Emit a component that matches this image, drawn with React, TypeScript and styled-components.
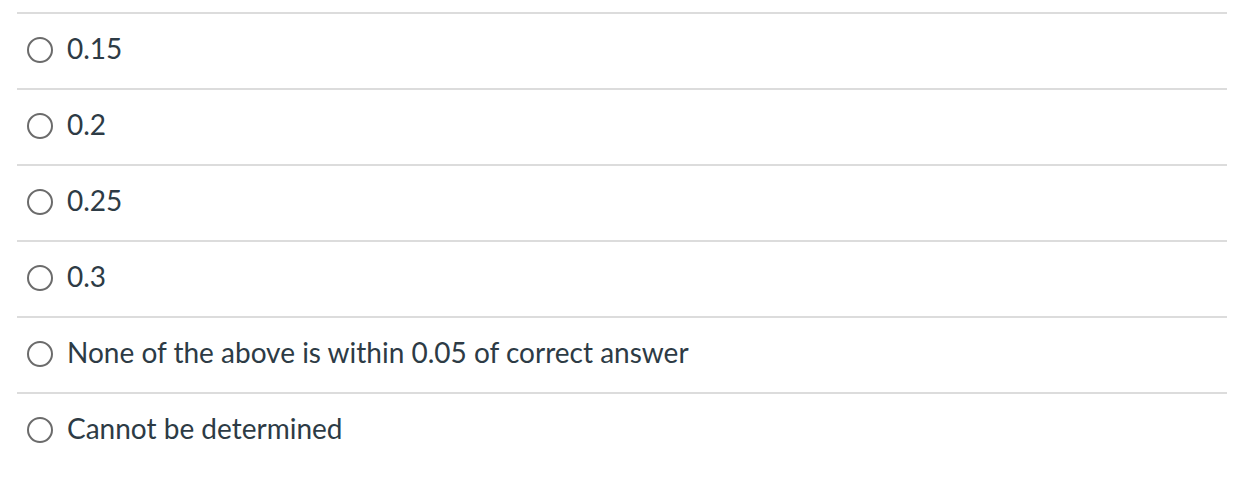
import React from "react";
import styled, { createGlobalStyle } from "styled-components";

const Global = createGlobalStyle`
  body { margin: 0; background: #fff; font-family: Lato, "Liberation Sans", sans-serif; }
`;

const List = styled.div`
  padding: 12px 32px 0 17px;
  display: flex;
  flex-direction: column;
`;

const Row = styled.label`
  display: flex;
  align-items: center;
  gap: 14px;
  border-top: 2px solid #dcdcdc;
  padding-left: 10px;
  padding-bottom: 6px;
  box-sizing: content-box;
  height: 68px;
`;

const Radio = styled.span`
  width: 22px;
  height: 22px;
  border: 2px solid #6b6b6b;
  border-radius: 50%;
  flex: none;
  margin-top: 4px;
`;

const Text = styled.span`
  font-size: 28px;
  line-height: 34px;
  color: #2d3b45;
`;

const options = ["0.15", "0.2", "0.25", "0.3", "None of the above is within 0.05 of correct answer", "Cannot be determined"];

export default function App() {
  return (
    <>
      <Global />
      <List>
        {options.map((o) => (
          <Row key={o}>
            <Radio />
            <Text>{o}</Text>
          </Row>
        ))}
      </List>
    </>
  );
}
